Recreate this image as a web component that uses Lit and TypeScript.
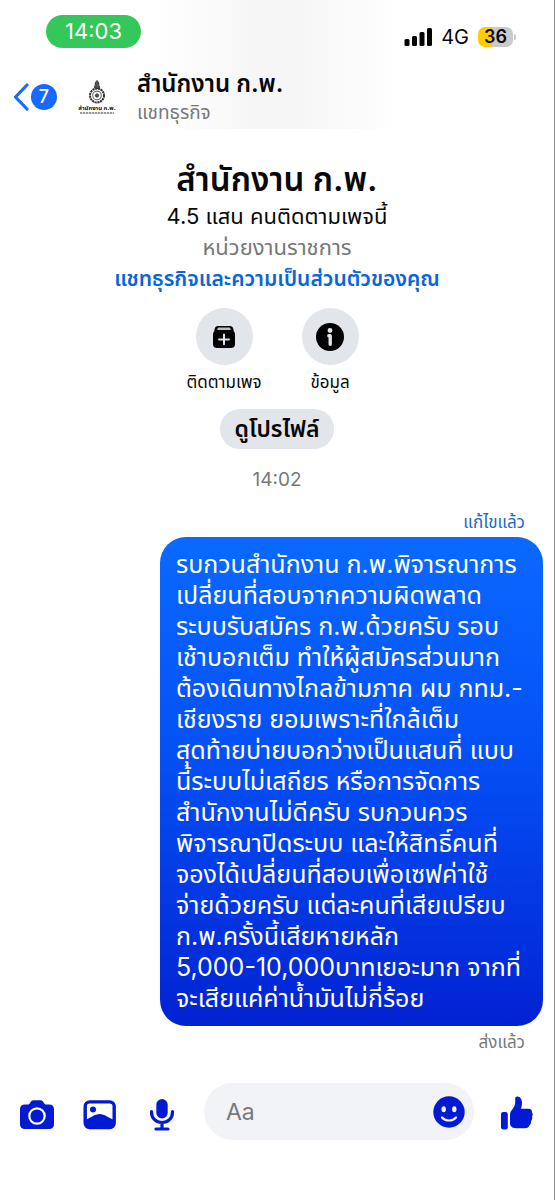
import { LitElement, html, css } from "lit";
import { customElement, state } from "lit/decorators.js";

const MESSAGE_LINES = [
  "รบกวนสำนักงาน ก.พ.พิจารณาการ",
  "เปลี่ยนที่สอบจากความผิดพลาด",
  "ระบบรับสมัคร ก.พ.ด้วยครับ รอบ",
  "เช้าบอกเต็ม ทำให้ผู้สมัครส่วนมาก",
  "ต้องเดินทางไกลข้ามภาค ผม กทม.-",
  "เชียงราย ยอมเพราะที่ใกล้เต็ม",
  "สุดท้ายบ่ายบอกว่างเป็นแสนที่ แบบ",
  "นี้ระบบไม่เสถียร หรือการจัดการ",
  "สำนักงานไม่ดีครับ รบกวนควร",
  "พิจารณาปิดระบบ และให้สิทธิ์คนที่",
  "จองได้เปลี่ยนที่สอบเพื่อเซฟค่าใช้",
  "จ่ายด้วยครับ แต่ละคนที่เสียเปรียบ",
  "ก.พ.ครั้งนี้เสียหายหลัก",
  "5,000-10,000บาทเยอะมาก จากที่",
  "จะเสียแค่ค่าน้ำมันไม่กี่ร้อย",
];

const shared = css`
  :host {
    display: block;
    font-family: Inter, "Noto Sans Thai", Thonburi, "Noto Sans", sans-serif;
  }
  * {
    box-sizing: border-box;
  }
  button,
  a {
    font: inherit;
    color: inherit;
    background: none;
    border: 0;
    padding: 0;
    text-decoration: none;
    cursor: pointer;
  }
  svg {
    display: block;
  }
`;

@customElement("status-bar")
export class StatusBar extends LitElement {
  static styles = [
    shared,
    css`
      .bar {
        display: flex;
        align-items: center;
        justify-content: space-between;
        padding: 15px 38px 0 46px;
      }
      .clock {
        width: 95px;
        border-radius: 17px;
        background: #34c759;
        color: #fff;
        font-size: 22px;
        line-height: 33px;
        text-align: center;
      }
      .signals {
        display: flex;
        align-items: center;
        padding-top: 11px;
      }
      .network {
        padding: 0 9px 0 8px;
        font-size: 20px;
        line-height: 22px;
      }
      .battery {
        width: 35px;
        border-radius: 7px;
        background: linear-gradient(90deg, #fc0 14px, #cacaca 14px);
        font-size: 18px;
        font-weight: 600;
        line-height: 20px;
        text-align: center;
      }
      .tip {
        width: 2px;
        height: 6px;
        margin-left: 1px;
        border-radius: 0 2px 2px 0;
        background: #cacaca;
      }
    `,
  ];

  render() {
    return html`
      <div class="bar">
        <div class="clock">14:03</div>
        <div class="signals">
          <svg width="29" height="18" viewBox="0 0 29 18" aria-hidden="true">
            <rect x="0.5" y="11" width="5" height="7" rx="1.5" />
            <rect x="8" y="8" width="5" height="10" rx="1.5" />
            <rect x="15.5" y="4" width="5" height="14" rx="1.5" />
            <rect x="23" y="0" width="5" height="18" rx="1.5" />
          </svg>
          <span class="network">4G</span>
          <span class="battery">36</span>
          <span class="tip"></span>
        </div>
      </div>
    `;
  }
}

@customElement("chat-header")
export class ChatHeader extends LitElement {
  static styles = [
    shared,
    css`
      .header {
        display: flex;
        align-items: center;
        padding: 20px 13px 4px;
      }
      .back {
        display: flex;
        align-items: center;
        gap: 2px;
      }
      .count {
        width: 26px;
        border-radius: 50%;
        background: #1769ff;
        color: #fff;
        font-size: 18px;
        font-weight: 500;
        line-height: 26px;
        text-align: center;
      }
      .avatar {
        display: flex;
        flex-direction: column;
        align-items: center;
        width: 40px;
        margin: 0 20px;
        white-space: nowrap;
      }
      .agency {
        font-size: 6px;
        font-weight: 700;
        line-height: 8px;
      }
      .agency-en {
        height: 2px;
        width: 34px;
        background: repeating-linear-gradient(90deg, #999 0 2px, #ddd 2px 3px);
      }
      .name {
        margin: 0;
        font-size: 24px;
        font-weight: 600;
        line-height: 32px;
      }
      .kind {
        margin: 0;
        color: #77787b;
        font-size: 19px;
        line-height: 25px;
      }
    `,
  ];

  render() {
    return html`
      <header class="header">
        <button class="back" aria-label="กลับ">
          <svg width="16" height="28" viewBox="0 0 16 28" fill="none" stroke="#1769ff"
            stroke-width="3.2" stroke-linecap="round" stroke-linejoin="round">
            <path d="M14 2 2.5 14 14 26" />
          </svg>
          <span class="count">7</span>
        </button>
        <div class="avatar">
          <svg width="18" height="24" viewBox="0 0 18 24" fill="none" stroke="#333">
            <path d="M9 0.5C7.5 2 7 3.500 7.200 5.500C6.200 6 6 7.500 7 8.500H11C12 7.500 11.800 6 10.800 5.500C11 3.500 10.500 2 9 0.500Z" fill="#555" />
            <circle cx="9" cy="15.500" r="7" stroke-width="2" stroke-dasharray="2.200 0.600" />
            <circle cx="9" cy="15.500" r="4.300" stroke-width="1.200" stroke="#777" />
            <circle cx="9" cy="15.500" r="1.600" fill="#555" />
          </svg>
          <span class="agency">สำนักงาน ก.พ.</span>
          <span class="agency-en"></span>
        </div>
        <div>
          <h1 class="name">สำนักงาน ก.พ.</h1>
          <p class="kind">แชทธุรกิจ</p>
        </div>
      </header>
    `;
  }
}

@customElement("page-profile")
export class PageProfile extends LitElement {
  static styles = [
    shared,
    css`
      .profile {
        display: flex;
        flex-direction: column;
        align-items: center;
        padding-top: 28px;
        text-align: center;
      }
      .title {
        margin: 0;
        font-size: 33px;
        font-weight: 600;
        line-height: 44px;
      }
      .line {
        margin: 0;
        font-size: 22px;
        line-height: 31px;
      }
      .muted {
        color: #77787b;
      }
      .link {
        color: #0a66d8;
        font-size: 21px;
        font-weight: 600;
      }
      .actions {
        display: flex;
        padding-top: 14px;
      }
      .action {
        display: flex;
        flex-direction: column;
        align-items: center;
        gap: 5px;
        width: 106px;
        font-size: 17px;
        line-height: 24px;
      }
      .disc {
        display: grid;
        place-items: center;
        width: 57px;
        height: 57px;
        border-radius: 50%;
        background: #e2e5ea;
      }
      .view {
        margin-top: 15px;
        padding: 0 15px;
        border-radius: 20px;
        background: #e2e5ea;
        font-size: 23px;
        font-weight: 600;
        line-height: 40px;
      }
    `,
  ];

  render() {
    return html`
      <section class="profile">
        <h2 class="title">สำนักงาน ก.พ.</h2>
        <p class="line">4.5 แสน คนติดตามเพจนี้</p>
        <p class="line muted">หน่วยงานราชการ</p>
        <a class="line link" href="#privacy">แชทธุรกิจและความเป็นส่วนตัวของคุณ</a>
        <div class="actions">
          <button class="action">
            <span class="disc">
              <svg width="24" height="24" viewBox="0 0 24 24">
                <path d="M6 1H18C19.700 1 20.800 2 21.200 3.600L21.800 6H2.200L2.800 3.600C3.200 2 4.300 1 6 1Z" />
                <path d="M5.500 3.800C5.700 2.900 6.200 2.600 7 2.600H17C17.800 2.600 18.300 2.900 18.500 3.800L18.900 5H5.100Z" fill="#b9bcc0" />
                <rect x="1" y="5.500" width="22" height="17.500" rx="4" />
                <path d="M12 9.500V19.300M7.100 14.400H16.900" stroke="#e2e5ea" stroke-width="2" stroke-linecap="round" />
              </svg>
            </span>
            ติดตามเพจ
          </button>
          <button class="action">
            <span class="disc">
              <svg width="28" height="28" viewBox="0 0 28 28">
                <circle cx="14" cy="14" r="14" />
                <circle cx="14" cy="7.500" r="2.400" fill="#e2e5ea" />
                <path d="M12.800 12.700H14.200V21.300" fill="none" stroke="#e2e5ea" stroke-width="3.400"
                  stroke-linecap="round" stroke-linejoin="round" />
              </svg>
            </span>
            ข้อมูล
          </button>
        </div>
        <button class="view">ดูโปรไฟล์</button>
      </section>
    `;
  }
}

@customElement("message-thread")
export class MessageThread extends LitElement {
  static styles = [
    shared,
    css`
      .thread {
        display: flex;
        flex-direction: column;
        align-items: flex-end;
        padding: 19px 11px 0;
      }
      .time {
        align-self: center;
        color: #77787b;
        font-size: 19px;
        line-height: 24px;
      }
      .note {
        padding-right: 18px;
        font-size: 17px;
        line-height: 24px;
      }
      .edited {
        margin-top: 18px;
        color: #1f68c0;
      }
      .sent {
        padding-top: 4px;
        color: #77787b;
      }
      .bubble {
        width: 72%;
        margin: 3px 0 0;
        padding: 12px 0 12px 16px;
        border-radius: 26px;
        background: linear-gradient(#0a69ff, #0450f5 45%, #0222d2);
        color: #fff;
        font-size: 25px;
        line-height: 31px;
        white-space: nowrap;
      }
      .row {
        display: block;
      }
    `,
  ];

  render() {
    return html`
      <section class="thread">
        <time class="time">14:02</time>
        <span class="note edited">แก้ไขแล้ว</span>
        <p class="bubble">
          ${MESSAGE_LINES.map((line) => html`<span class="row">${line}</span>`)}
        </p>
        <span class="note sent">ส่งแล้ว</span>
      </section>
    `;
  }
}

@customElement("chat-composer")
export class ChatComposer extends LitElement {
  @state() private draft = "";

  static styles = [
    shared,
    css`
      .composer {
        display: flex;
        align-items: center;
        padding: 29px 21px 60px 19px;
        color: #021bd2;
      }
      .tools {
        display: flex;
        align-items: center;
        gap: 28px;
        padding: 6px 25px 0 0;
      }
      .field {
        display: flex;
        flex: 1;
        align-items: center;
        height: 57px;
        min-width: 0;
        padding: 0 9px 0 22px;
        border-radius: 29px;
        background: #f2f3f7;
      }
      .input {
        flex: 1;
        min-width: 0;
        padding: 0;
        border: 0;
        outline: 0;
        background: none;
        font: inherit;
        font-size: 23px;
        line-height: 30px;
      }
      .input::placeholder {
        color: #77787b;
        opacity: 1;
      }
      .like {
        padding: 3px 0 0 26px;
      }
    `,
  ];

  private onInput(event: Event) {
    this.draft = (event.target as HTMLInputElement).value;
  }

  render() {
    return html`
      <form class="composer">
        <div class="tools">
          <button type="button" aria-label="กล้อง">
            <svg width="36" height="32" viewBox="0 0 36 32" fill="currentColor">
              <path d="M6 5.500H8.500C10 5.500 10.600 4.600 11.500 3.200C12.400 1.800 13.400 1.300 15 1.300H21C22.600 1.300 23.600 1.800 24.500 3.200C25.400 4.600 26 5.500 27.500 5.500H30C33.300 5.500 35 7.200 35 10.500V25C35 28.300 33.300 30 30 30H6C2.700 30 1 28.300 1 25V10.500C1 7.200 2.700 5.500 6 5.500Z" />
              <circle cx="18" cy="17" r="7.700" fill="none" stroke="#fff" stroke-width="2.200" />
            </svg>
          </button>
          <button type="button" aria-label="รูปภาพ">
            <svg width="34" height="32" viewBox="0 0 34 32" fill="currentColor">
              <rect x="2.200" y="2.900" width="29" height="25.600" rx="4.500" fill="none" stroke="currentColor" stroke-width="3.400" />
              <circle cx="10" cy="10.500" r="3" />
              <path d="M2 21C7.500 19 12 15 16.700 15C21.500 15 25.500 19 31.500 21V25C31.500 28 30 29.500 27 29.500H6.500C3.500 29.500 2 28 2 25Z" />
            </svg>
          </button>
          <button type="button" aria-label="ข้อความเสียง">
            <svg width="34" height="34" viewBox="0 0 34 34" fill="none" stroke="currentColor"
              stroke-width="3.200" stroke-linecap="round">
              <rect x="11.300" y="1" width="11.400" height="19.500" rx="5.700" fill="currentColor" stroke="none" />
              <path d="M6.500 13.500V14C6.500 20.500 11 24.500 17 24.500S27.500 20.500 27.500 14V13.500M17 25V30M11 31H23" />
            </svg>
          </button>
        </div>
        <div class="field">
          <input class="input" type="text" placeholder="Aa" aria-label="ข้อความ"
            .value=${this.draft} @input=${this.onInput} />
          <button type="button" aria-label="อีโมจิ">
            <svg width="32" height="32" viewBox="0 0 32 32">
              <circle cx="16" cy="16" r="15.700" fill="currentColor" />
              <ellipse cx="10.700" cy="13.300" rx="2.200" ry="3" fill="#f2f3f7" />
              <ellipse cx="21.300" cy="13.300" rx="2.200" ry="3" fill="#f2f3f7" />
              <path d="M9 21.500C12.500 25.500 19.500 25.500 23 21.500" fill="none" stroke="#f2f3f7" stroke-width="2.200" stroke-linecap="round" />
            </svg>
          </button>
        </div>
        <button class="like" type="button" aria-label="ถูกใจ">
          <svg width="33" height="34" viewBox="0 0 33 34" fill="currentColor">
            <rect x="1" y="16" width="6.800" height="17.500" rx="2.200" />
            <path d="M10 19C10 17.400 10.300 16.200 11.300 14.800C13.500 12 15.200 9.800 15.200 6.500V2.600C15.200 1.200 16 0.500 17.400 0.500C20.500 0.500 22 3.500 22 7C22 9 21.500 10.800 21 12.700H28.500C31 12.700 32.300 14 31.900 16.200C33 17.200 33 19.600 32 20.600C32.600 22 32.300 24 31 25C31.300 27 30.700 28.300 29.500 29.200C28.900 31.200 27.600 32.200 25 32.200H16C12 32.200 10 30.200 10 27Z" />
          </svg>
        </button>
      </form>
    `;
  }
}

@customElement("app-root")
export class AppRoot extends LitElement {
  static styles = [
    shared,
    css`
      :host {
        min-height: 100vh;
        border-right: 1px solid #8f8f8f;
        background: #fff;
        color: #080809;
      }
      .top {
        background: linear-gradient(90deg, #fff 28%, #f6f6f7 46%, #f6f6f7 54%, #fdfdfd 69%, #fff 72%);
      }
    `,
  ];

  render() {
    return html`
      <div class="top">
        <status-bar></status-bar>
        <chat-header></chat-header>
      </div>
      <main>
        <page-profile></page-profile>
        <message-thread></message-thread>
      </main>
      <chat-composer></chat-composer>
    `;
  }
}
